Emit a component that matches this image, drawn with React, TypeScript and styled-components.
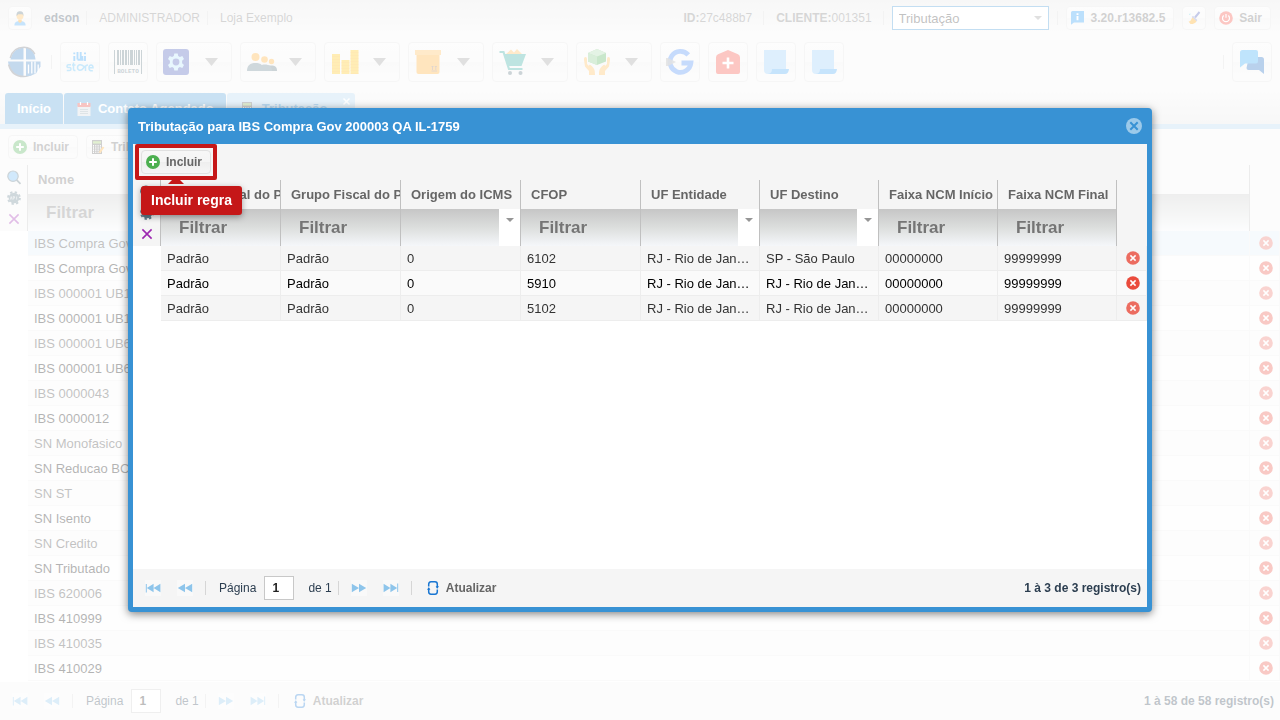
import React from "react";
import styled, { createGlobalStyle, css } from "styled-components";

const GlobalStyle = createGlobalStyle`
  * { box-sizing: border-box; }
  body {
    margin: 0;
    background: #fff;
    font-family: "Liberation Sans", Arial, sans-serif;
    font-size: 13px;
    color: #000;
  }
  button, input, select { font-family: inherit; }
  svg { display: block; flex: none; }
`;

/* ---------- icons ---------- */

const PlusIcon = () => (
  <svg width="14" height="14" viewBox="0 0 14 14">
    <circle cx="7" cy="7" r="7" fill="#4caf50" />
    <path d="M7 3.2v7.6M3.2 7h7.6" stroke="#fff" strokeWidth="2" />
  </svg>
);

const DeleteIcon = () => (
  <svg width="14" height="14" viewBox="0 0 14 14">
    <circle cx="7" cy="7" r="6.8" fill="#ea4b3c" />
    <path d="M4.4 4.4l5.200 5.200M9.600 4.400l-5.200 5.200" stroke="#fff" strokeWidth="1.5" />
  </svg>
);

const CloseIcon = () => (
  <svg width="16" height="16" viewBox="0 0 16 16">
    <circle cx="8" cy="8" r="8" fill="#9ccaea" />
    <path d="M4.3 4.3l7.4 7.4M11.7 4.3l-7.4 7.4" stroke="#3892d4" strokeWidth="2" />
  </svg>
);

const SearchIcon = () => (
  <svg width="16" height="16" viewBox="0 0 16 16">
    <path d="M10.300 10.600l4.200 4.200" stroke="#546e7a" strokeWidth="1.8" />
    <circle cx="7" cy="7.200" r="5.200" fill="#64b5f6" stroke="#546e7a" strokeWidth="1.200" />
  </svg>
);

const GearIcon = () => (
  <svg width="16" height="16" viewBox="0 0 16 16">
    <circle cx="8" cy="8" r="5.900" fill="none" stroke="#607d8b" strokeWidth="2" strokeDasharray="2.317 2.317" />
    <circle cx="8" cy="8" r="5.300" fill="#607d8b" />
    <path d="M4.300 9.600l.9-3 .9 3M7.200 9.600v-3h1.300v1.500H7.200M10.600 6.500v3.100" stroke="#cfd8dc" strokeWidth=".8" fill="none" />
  </svg>
);

const ClearIcon = () => (
  <svg width="16" height="16" viewBox="0 0 16 16">
    <path d="M3.4 3.4l9.2 9.2M12.6 3.4l-9.2 9.2" stroke="#9c27b0" strokeWidth="1.6" />
  </svg>
);

const UserIcon = () => (
  <svg width="16" height="16" viewBox="0 0 16 16">
    <path d="M2.4 15.5c0-3.4 2.4-4.4 5.6-4.4s5.6 1 5.6 4.4z" fill="#42a5f5" />
    <path d="M6.3 9.5h3.4v2.2L8 13l-1.7-1.3z" fill="#ff9800" />
    <circle cx="8" cy="6" r="3.5" fill="#ffb74d" />
    <path d="M4.6 6C4.300 2.500 5.600 1.300 8.200 1.300c2.500 0 3.600 1.700 3.200 4.700L10.400 4.300H6.200L5 5.800z" fill="#546e7a" />
  </svg>
);

const InfoIcon = () => (
  <svg width="14" height="14" viewBox="0 0 14 14">
    <path d="M1.5 0H13v11.5H3L0 13.8V1.5Q0 0 1.5 0z" fill="#2196f3" />
    <path d="M6.500 2.3v1.8M6.500 5v4.2" stroke="#fff" strokeWidth="1.9" />
  </svg>
);

const BroomIcon = () => (
  <svg width="14" height="14" viewBox="0 0 14 14">
    <path d="M12.500 1L8 6.5" stroke="#3f51b5" strokeWidth="2" />
    <path d="M6 4.800l4.300 4.300-1 1.400L4.600 6z" fill="#7986cb" />
    <path d="M5.200 6.200l4.300 4c-1 2-3.300 3-6 2.800L1.600 10.400c2 0 2.700-1.800 3.600-4.200z" fill="#ffa000" />
    <path d="M2 3.400l1.600-.4" stroke="#4dd0e1" strokeWidth="1" />
  </svg>
);

const PowerIcon = () => (
  <svg width="14" height="14" viewBox="0 0 14 14">
    <circle cx="7" cy="7" r="6.800" fill="#f44336" />
    <path d="M4.700 4.500a3.500 3.500 0 1 0 4.600 0M7 3v3.800" stroke="#fff" strokeWidth="1.200" fill="none" />
  </svg>
);

const BrandIcon = () => (
  <svg width="35" height="32" viewBox="0 0 35 32">
    <path d="M15.500 1.500v12H2.500C3.500 7 8 2 15.500 1.500z" fill="#2f7cc6" />
    <path d="M18 1.500v12h9.500C27 7 23 2 18 1.500z" fill="#2f7cc6" />
    <path d="M2.200 12C4 5 9 1.200 16 1.200c5 0 8.500 2.300 10.800 7" stroke="#6a6f78" strokeWidth="1.500" fill="none" />
    <path d="M0 15.500h15.500v14.800C7.500 30 .8 25 0 15.500z" fill="#3b7fc4" />
    <path d="M.6 18.500C2.500 26 8 30.400 15.500 30.600c4 0 7-1.300 9.500-3.600" stroke="#6a6f78" strokeWidth="1.500" fill="none" />
    <path d="M18 15.500h14.500v5L28 27.500l-6 2.500h-4z" fill="#3b7fc4" />
    <path d="M20.500 18.500v9M23.800 15.500v12M27 15.500v12M30.200 18.500v8" stroke="#fff" strokeWidth="1.300" />
  </svg>
);

const StoreIcon = () => (
  <svg width="28" height="24" viewBox="0 0 28 24">
    <g fill="none">
      <path d="M8.300 6v5M11.500 2v7.500M14.700 2v7.500M19 6v5M8.300 2.500v1.800M19 2.500v1.800M11.500 9.800h6M16.300 6v4" stroke="#2196f3" strokeWidth="1.900" />
      <path d="M5 14.800H2.500q-1.500 0-1.500 1.400t1.500 1.400h1q1.500 0 1.500 1.500t-1.500 1.500H.8M7.500 12.500v6.500q0 1.600 2 1.600M6 15h3.500M18 16.500c-3-3-6.500-2-6.500 1s3.500 4 6 .5l1.500-2M19.500 21v-4q0-2 2.500-2M23 17.700h4q0-2.800-2-2.800t-2 2.800q0 3 2 3h1.800" stroke="#4fb7f3" strokeWidth="1.500" />
    </g>
  </svg>
);

const BarcodeIcon = () => (
  <svg width="28" height="26" viewBox="0 0 28 26">
    <g fill="#546e7a">
      <path d="M0 1h1v24H0zM27 1h1v24h-1z" />
      <path d="M3 1h2v15H3zM6 1h1v15H6zM8 1h2v15H8zM11 1h2v15h-2zM14 1h1v15h-1zM16 1h3v15h-3zM20 1h1v15h-1zM22 1h1v15h-1zM24 1h2v15h-2z" />
      <text x="14" y="24" fontSize="6" fontWeight="700" fontFamily="Liberation Mono, monospace" textAnchor="middle">BOLETO</text>
    </g>
  </svg>
);

const SettingsIcon = () => (
  <svg width="26" height="26" viewBox="0 0 26 26">
    <rect width="26" height="26" rx="3" fill="#3f51b5" />
    <path
      d="M11.300 4.500h3.400l.5 2.500 1.700 1 2.400-.9 1.700 3-1.900 1.600v2.600l1.900 1.600-1.700 3-2.400-.9-1.700 1-.5 2.500h-3.400l-.5-2.500-1.700-1-2.400.9-1.700-3 1.900-1.600v-2.600l-1.900-1.600 1.700-3 2.400.9 1.700-1zM13 9.600a3.400 3.400 0 1 0 0 6.800 3.400 3.400 0 0 0 0-6.800z"
      fill="#b3e5fc"
      fillRule="evenodd"
    />
  </svg>
);

const PeopleIcon = () => (
  <svg width="30" height="26" viewBox="0 0 30 26">
    <path d="M16 22c0-4 2-5.500 7.500-5.500S30 18.500 30 22z" fill="#546e7a" />
    <path d="M12 22c0-5 2-6.500 6-6.500s7 2 7 6.500z" fill="#607d8b" />
    <path d="M0 22c0-5.500 3-8 8.500-8s8.500 2.500 8.500 8z" fill="#607d8b" />
    <circle cx="8.500" cy="8" r="4" fill="#ffa726" />
    <circle cx="17.500" cy="10.500" r="3.300" fill="#ffa726" />
    <circle cx="24.500" cy="12.500" r="2.700" fill="#ffa726" />
  </svg>
);

const CoinsIcon = () => (
  <svg width="28" height="26" viewBox="0 0 28 26">
    <g stroke="#ffc107" strokeWidth="8">
      <path d="M5 5v20M14.500 11v14M23.500 1v24" />
    </g>
    <g stroke="#ffa000" strokeWidth="8" strokeDasharray="1 2">
      <path d="M5 7v18M14.500 13v12M23.500 3v22" opacity=".35" />
    </g>
  </svg>
);

const BoxIcon = () => (
  <svg width="26" height="26" viewBox="0 0 26 26">
    <path d="M0 1h26v5H0z" fill="#ffb74d" />
    <path d="M1.500 6h23v17q0 2-2 2h-19q-2 0-2-2z" fill="#ffa726" />
    <path d="M17.500 21v-4M20.800 21v-4M16.500 22h5.500M16.500 18l1-1 1 1M19.800 18l1-1 1 1" stroke="#8d6e63" strokeWidth=".8" fill="none" />
  </svg>
);

const CartIcon = () => (
  <svg width="28" height="28" viewBox="0 0 28 28">
    <path d="M7 6l5-4.500 3 3 3-3.500 5 5z" fill="#ffb74d" />
    <path d="M5 6h22l-4.500 12H9.500z" fill="#26a69a" />
    <path d="M.5 4h4L10 21h13.500" stroke="#26a69a" strokeWidth="2.200" fill="none" />
    <circle cx="11" cy="25" r="2" fill="#546e7a" />
    <circle cx="21.500" cy="25" r="2" fill="#546e7a" />
  </svg>
);

const HandsIcon = () => (
  <svg width="28" height="28" viewBox="0 0 28 28">
    <path d="M14 1l9 4v8.500l-9 3.500-9-3.500V5z" fill="#4caf50" />
    <path d="M14 1l9 4-9 3.500L5 5z" fill="#a5d6a7" />
    <path d="M5 5l9 3.500V17l-9-3.500z" fill="#81c784" />
    <path d="M2.500 9Q.800 9 1 12l1 6.500L6 23v4h6c0-6-1-7-4.500-10Q6 16 6 18l-2-2v-5q0-2-1.500-2zM25.500 9q1.700 0 1.500 3l-1 6.500L22 23v4h-6c0-6 1-7 4.500-10Q22 16 22 18l2-2v-5q0-2 1.500-2z" fill="#ffb74d" />
  </svg>
);

const GoogleIcon = () => (
  <svg width="28" height="28" viewBox="0 0 28 28">
    <path d="M22.300 6.800A10.500 10.500 0 1 0 24.900 15H15.500" stroke="#4285f4" strokeWidth="4.800" fill="none" />
    <path d="M0 10h2l8 4-8 4H0z" fill="#9e9e9e" opacity=".85" />
  </svg>
);

const HealthIcon = () => (
  <svg width="24" height="24" viewBox="0 0 24 24">
    <path d="M12 0l10 4.200Q24 5 24 7.500V22q0 2-2 2H2q-2 0-2-2V7.500Q0 5 2 4.200z" fill="#f44336" />
    <path d="M12 7.500v11M6.500 13h11" stroke="#fff" strokeWidth="2.600" />
  </svg>
);

const ScrollIcon = () => (
  <svg width="26" height="26" viewBox="0 0 26 26">
    <path d="M1 1h22v19H9v5H5q-4 0-4-4z" fill="#90caf9" />
    <path d="M5 25q4-.5 4-5h17q-.5 5-4 5z" fill="#42a5f5" />
  </svg>
);

const ChatIcon = () => (
  <svg width="26" height="26" viewBox="0 0 26 26">
    <path d="M10 8h12.500Q25 8 25 10.500V25l-5-4H9.500Q7.500 21 7.500 19z" fill="#1565c0" />
    <path d="M3.500 1H17q2 0 2 2v9.500q0 2-2 2H6L1 18.500V3.500Q1 1 3.500 1z" fill="#29a3f3" />
  </svg>
);

const CalendarIcon = () => (
  <svg width="14" height="14" viewBox="0 0 14 14">
    <path d="M.5 4h13v10H.5z" fill="#cfd8dc" />
    <path d="M.5 1h13v4H.5z" fill="#e53935" />
    <path d="M3.500 0v3M10.500 0v3" stroke="#fff" strokeWidth="1.200" />
    <path d="M3 7.500h8M3 9.500h8M3 11.500h8" stroke="#90a4ae" />
  </svg>
);

const CalculatorIcon = () => (
  <svg width="14" height="14" viewBox="0 0 14 14">
    <path d="M1 0h10v14H1z" fill="#616161" />
    <path d="M2 1.200h8v2.400H2z" fill="#9ccc65" />
    <path d="M2.500 5v8M4.800 5v8M7.100 5v8M9.400 5v8" stroke="#fff" strokeDasharray="1.600 .6" />
    <path d="M12.500 7L8.500 12.800" stroke="#ffa726" strokeWidth="2" />
  </svg>
);

const ArrowDown = ({ size = 10 }: { size?: number }) => (
  <svg width={size} height={size / 2} viewBox="0 0 10 5">
    <path d="M0 0h10L5 5z" fill="#969696" />
  </svg>
);

const MenuArrow = () => (
  <svg width="13" height="8" viewBox="0 0 13 8">
    <path d="M0 0h13L6.500 8z" fill="#969696" />
  </svg>
);

type PageKind = "first" | "prev" | "next" | "last";

const PageArrow = ({ kind }: { kind: PageKind }) => (
  <svg width="16" height="16" viewBox="0 0 16 16">
    <path d="M0 0h16v16H0z" fill="#f9f9f9" />
    <g fill="#8ec5eb" transform={kind === "next" || kind === "last" ? "rotate(180 8 8)" : undefined}>
      {(kind === "first" || kind === "last") && <path d="M.8 4h1v8.500h-1z" />}
      {kind === "first" || kind === "last" ? (
        <path d="M8.600 3.700v8.600L1.800 8zM15.400 3.700v8.600L8.600 8z" />
      ) : (
        <path d="M8 3.700v8.600L.8 8zM15.200 3.700v8.600L8 8z" />
      )}
    </g>
  </svg>
);

const RefreshIcon = () => (
  <svg width="12" height="16" viewBox="0 0 12 16">
    <path d="M1.700 6.500V4.500Q1.700 1.800 4 1.800h4q2.300 0 2.300 2.400v4M10.300 9.500v2Q10.300 14.200 8 14.200H4q-2.300 0-2.300-2.400v-4" stroke="#1976d2" strokeWidth="1.500" fill="none" />
    <path d="M8.600 6.300h3.400L10.300 8.600zM0 9.700h3.400L1.700 7.400z" fill="#1976d2" />
  </svg>
);

/* ---------- shared controls ---------- */

const raised = css`
  border: 1px solid #e1e1e1;
  border-radius: 4px;
  background: linear-gradient(#f7f7f7, #f5f5f5 50%, #eeeeee 50%, #f6f6f6);
`;

const Button = styled.button`
  ${raised}
  display: flex;
  align-items: center;
  gap: 6px;
  height: 24px;
  padding: 0 8px 0 4px;
  color: #666;
  font-size: 12px;
  font-weight: 700;
  white-space: nowrap;
`;

const SquareButton = styled(Button)`
  justify-content: center;
  width: 24px;
  padding: 0;
`;

const PlainButton = styled.button`
  display: flex;
  align-items: center;
  justify-content: center;
  gap: 7px;
  padding: 0;
  border: 0;
  background: none;
  color: #666;
  font-size: 12px;
  font-weight: 700;
`;

const Divider = styled.span`
  flex: none;
  width: 1px;
  height: 14px;
  background: #d6d6d6;
`;

/* ---------- header ---------- */

const Page = styled.div`
  display: flex;
  flex-direction: column;
  min-height: 100vh;
  background: #fff;
`;

const TopBar = styled.header`
  display: flex;
  align-items: center;
  justify-content: space-between;
  height: 36px;
  padding: 0 9px 0 8px;
  background: linear-gradient(#e4e4e4, #f5f5f5);
  color: #777;
  font-size: 12px;
  white-space: nowrap;
`;

const UserInfo = styled.div`
  display: flex;
  align-items: center;
  gap: 12px;
`;

const UserText = styled.span<{ $strong?: boolean }>`
  display: flex;
  align-items: center;
  gap: 7px;
  color: ${(p) => (p.$strong ? "#334455" : "#777")};
  font-weight: ${(p) => (p.$strong ? 700 : 400)};
`;

const Session = styled.div`
  display: flex;
  align-items: center;
  gap: 8px;
`;

const SessionText = styled.span`
  padding: 0 3px 0 4px;
  color: #777;
`;

const ModuleBox = styled.div`
  position: relative;
  width: 157px;

  svg {
    position: absolute;
    right: 7px;
    top: 10px;
    pointer-events: none;
  }
`;

const ModuleSelect = styled.select`
  appearance: none;
  display: block;
  width: 100%;
  height: 24px;
  padding: 0 6px;
  border: 1px solid #3892d4;
  border-radius: 0;
  background: #fff;
  color: #333;
  font-size: 13px;
`;

const MainBar = styled.nav`
  display: flex;
  align-items: center;
  gap: 8px;
  height: 52px;
  padding: 0 8px;
  background: #f5f5f5;
`;

const MainButton = styled.button<{ $menu?: boolean }>`
  ${raised}
  display: flex;
  align-items: center;
  justify-content: ${(p) => (p.$menu ? "space-between" : "center")};
  width: ${(p) => (p.$menu ? 76 : 40)}px;
  height: 40px;
  padding: ${(p) => (p.$menu ? "0 13px 0 6px" : 0)};
`;

const Spacer = styled.div`
  flex: 1;
`;

const TabBar = styled.div`
  display: flex;
  align-items: flex-end;
  gap: 1px;
  height: 41px;
  padding: 0 5px;
  border-bottom: 5px solid #add2ed;
  background: linear-gradient(#f5f5f5, #e4e4e4);
`;

const Tab = styled.button<{ $active?: boolean }>`
  position: relative;
  display: flex;
  align-items: center;
  gap: 7px;
  height: 31px;
  padding: ${(p) => (p.$active ? "0 28px 0 13px" : "0 12px")};
  border: 0;
  border-radius: 3px 3px 0 0;
  background: ${(p) => (p.$active ? "#add2ed" : "#4b9cd7")};
  color: ${(p) => (p.$active ? "#157fcc" : "#fff")};
  font-size: 13px;
  font-weight: 700;

  > svg {
    margin-left: 1px;
  }
`;

const TabClose = styled.span`
  position: absolute;
  top: 4px;
  right: 4px;
`;

const ActionBar = styled.div`
  display: flex;
  align-items: center;
  gap: 8px;
  height: 36px;
  padding: 0 8px;
  background: #f5f5f5;
`;

/* ---------- grid ---------- */

const GridArea = styled.div`
  display: flex;
  flex: 1;
  align-items: flex-start;
`;

const GridTools = styled.div`
  display: flex;
  flex: none;
  flex-direction: column;
  width: 28px;
  height: 66px;
  padding-top: 1px;
  border-right: 1px solid #c0c0c0;
  background: #f5f5f5;

  button {
    height: 21px;
  }
`;

const Table = styled.table`
  flex: 1;
  width: 0;
  table-layout: fixed;
  border-collapse: separate;
  border-spacing: 0;
`;

const DataCol = styled.col<{ $width?: string }>`
  width: ${(p) => p.$width ?? "auto"};
`;

const HeadCell = styled.th`
  height: 29px;
  padding: 0 0 0 10px;
  overflow: hidden;
  border-right: 1px solid #c0c0c0;
  background: #f5f5f5;
  color: #666;
  font-size: 13px;
  text-align: left;
  white-space: nowrap;
`;

const HeadEnd = styled.td`
  background: #f5f5f5;
`;

const FilterCell = styled.td`
  height: 37px;
  padding: 0;
  border-right: 1px solid #c0c0c0;
  background: linear-gradient(#c6c6c6, #dcdedd 50%, #f5f7fa);
`;

const FilterInput = styled.input`
  display: block;
  width: 100%;
  height: 37px;
  padding: 1px 0 0 18px;
  border: 0;
  background: none;
  font-size: 17px;
  font-weight: 700;

  &::placeholder {
    color: #757575;
    opacity: 1;
  }
`;

const FilterSelectBox = styled.div`
  position: relative;
  height: 37px;
`;

const FilterSelect = styled.select`
  appearance: none;
  width: 100%;
  height: 37px;
  border: 0;
  background: none;
`;

const FilterTrigger = styled.span`
  position: absolute;
  top: 0;
  right: 0;
  display: flex;
  justify-content: center;
  width: 21px;
  height: 37px;
  padding-top: 9px;
  background: #fff;
  pointer-events: none;
`;

const Cell = styled.td`
  height: 25px;
  padding: 0 6px;
  overflow: hidden;
  border-right: 1px solid #ededed;
  border-bottom: 1px solid #ededed;
  text-overflow: ellipsis;
  white-space: nowrap;
`;

const RowAction = styled(PlainButton)`
  width: 100%;
`;

const ActionCell = styled(Cell)`
  padding: 0 0 0 2px;
`;

const Row = styled.tr<{ $selected?: boolean; $page?: boolean }>`
  background: ${(p) => (p.$page ? "#fcfcfc" : "#fafafa")};

  &:nth-child(odd) {
    background: ${(p) => (p.$selected ? "#e2eff8" : p.$page ? "#f8f8f8" : "#f5f5f5")};
    color: #333;
  }
  &:nth-child(odd) svg {
    opacity: 0.8;
  }
`;

const Footer = styled.footer`
  display: flex;
  flex: none;
  align-items: center;
  height: 38px;
  padding: 0 6px 0 12px;
  background: #f5f5f5;
  color: #2c3e50;
  font-size: 12px;
`;

const PageButtons = styled.div`
  display: flex;
  align-items: center;
  gap: 12px;

  button + button {
    margin-left: 4px;
  }
`;

const PageField = styled.div`
  display: flex;
  align-items: center;
  gap: 8px;
  padding: 0 6px 0 13px;

  span {
    padding-left: 6px;
  }
`;

const PageInput = styled.input`
  width: 30px;
  height: 24px;
  padding: 0 7px;
  border: 1px solid #c8c8c8;
  background: #fff;
  color: #222;
  font-size: 12px;
  font-weight: 700;
`;

const NextButtons = styled(PageButtons)`
  padding: 0 15px 0 12px;
`;

const Total = styled.strong`
  margin-left: auto;
`;

/* ---------- modal ---------- */

const Overlay = styled.div`
  position: fixed;
  inset: 0;
  display: flex;
  align-items: center;
  justify-content: center;
  background: rgba(255, 255, 255, 0.7);
`;

const Modal = styled.section`
  display: flex;
  flex-direction: column;
  width: 80%;
  height: 70%;
  padding: 0 5px 5px;
  border-radius: 4px;
  background: #3892d4;
  box-shadow: 0 2px 8px rgba(0, 0, 0, 0.5);
`;

const ModalTitle = styled.div`
  display: flex;
  flex: none;
  align-items: center;
  justify-content: space-between;
  height: 36px;
  padding: 0 5px;
  color: #fff;

  h2 {
    margin: 0;
    font-size: 13px;
  }
`;

const ModalBody = styled.div`
  display: flex;
  flex: 1;
  flex-direction: column;
  min-height: 0;
  background: #fff;
`;

const Highlight = styled.div`
  position: relative;

  &::after {
    content: "";
    position: absolute;
    inset: -6px;
    border: 4px solid #c51718;
    border-radius: 2px;
    pointer-events: none;
  }
`;

const Hint = styled.div`
  position: absolute;
  z-index: 2;
  top: 36px;
  left: 0;
  padding: 0 10px;
  border-radius: 3px;
  background: #c51718;
  box-shadow: 0 2px 6px rgba(0, 0, 0, 0.35);
  color: #fff;
  font-size: 14px;
  font-weight: 700;
  line-height: 29px;
  white-space: nowrap;

  &::before {
    content: "";
    position: absolute;
    top: -10px;
    left: 27px;
    border: 8px solid transparent;
    border-top: 0;
    border-bottom-color: #c51718;
  }
`;

const Tools = () => (
  <GridTools>
    <PlainButton aria-label="Pesquisar"><SearchIcon /></PlainButton>
    <PlainButton aria-label="Configurar"><GearIcon /></PlainButton>
    <PlainButton aria-label="Limpar filtros"><ClearIcon /></PlainButton>
  </GridTools>
);

const Paging = ({ id, total }: { id: string; total: string }) => (
  <Footer>
    <PageButtons>
      <PlainButton aria-label="Primeira página"><PageArrow kind="first" /></PlainButton>
      <PlainButton aria-label="Página anterior"><PageArrow kind="prev" /></PlainButton>
      <Divider />
    </PageButtons>
    <PageField>
      <label htmlFor={id}>Página</label>
      <PageInput id={id} defaultValue="1" />
      <span>de 1</span>
    </PageField>
    <Divider />
    <NextButtons>
      <PlainButton aria-label="Próxima página"><PageArrow kind="next" /></PlainButton>
      <PlainButton aria-label="Última página"><PageArrow kind="last" /></PlainButton>
      <Divider />
    </NextButtons>
    <PlainButton><RefreshIcon />Atualizar</PlainButton>
    <Total>{total}</Total>
  </Footer>
);

const menus = [
  { name: "Configurações", icon: <SettingsIcon /> },
  { name: "Pessoas", icon: <PeopleIcon /> },
  { name: "Financeiro", icon: <CoinsIcon /> },
  { name: "Estoque", icon: <BoxIcon /> },
  { name: "Vendas", icon: <CartIcon /> },
  { name: "Produtos", icon: <HandsIcon /> },
];

const shortcuts = [
  { name: "Google", icon: <GoogleIcon /> },
  { name: "Farmácia", icon: <HealthIcon /> },
  { name: "Relatório fiscal", icon: <ScrollIcon /> },
  { name: "Relatório geral", icon: <ScrollIcon /> },
];

const taxes = [
  "IBS Compra Gov 200003 QA IL-1759",
  "IBS Compra Gov",
  "IBS 000001 UB1",
  "IBS 000001 UB1",
  "IBS 000001 UB6",
  "IBS 000001 UB6",
  "IBS 0000043",
  "IBS 0000012",
  "SN Monofasico",
  "SN Reducao BC",
  "SN ST",
  "SN Isento",
  "SN Credito",
  "SN Tributado",
  "IBS 620006",
  "IBS 410999",
  "IBS 410035",
  "IBS 410029",
];

const columns = [
  { title: "Grupo Fiscal do Produto", width: "120px" },
  { title: "Grupo Fiscal do Parceiro", width: "120px" },
  { title: "Origem do ICMS", width: "120px", list: true },
  { title: "CFOP", width: "120px" },
  { title: "UF Entidade", list: true },
  { title: "UF Destino", list: true },
  { title: "Faixa NCM Início" },
  { title: "Faixa NCM Final" },
];

const rules = [
  ["Padrão", "Padrão", "0", "6102", "RJ - Rio de Janeiro", "SP - São Paulo", "00000000", "99999999"],
  ["Padrão", "Padrão", "0", "5910", "RJ - Rio de Janeiro", "RJ - Rio de Janeiro", "00000000", "99999999"],
  ["Padrão", "Padrão", "0", "5102", "RJ - Rio de Janeiro", "RJ - Rio de Janeiro", "00000000", "99999999"],
];

export default function App() {
  return (
    <>
      <GlobalStyle />
      <Page>
        <TopBar>
          <UserInfo>
            <SquareButton aria-label="Usuário"><UserIcon /></SquareButton>
            <UserText $strong>edson<Divider /></UserText>
            <UserText>ADMINISTRADOR<Divider /></UserText>
            <UserText>Loja Exemplo</UserText>
          </UserInfo>
          <Session>
            <SessionText><b>ID:</b>27c488b7</SessionText>
            <Divider />
            <SessionText><b>CLIENTE:</b>001351</SessionText>
            <Divider />
            <ModuleBox>
              <ModuleSelect aria-label="Módulo" defaultValue="Tributação">
                <option>Tributação</option>
              </ModuleSelect>
              <ArrowDown size={8} />
            </ModuleBox>
            <Divider />
            <Button><InfoIcon />3.20.r13682.5</Button>
            <SquareButton aria-label="Limpar"><BroomIcon /></SquareButton>
            <Button><PowerIcon />Sair</Button>
          </Session>
        </TopBar>
        <MainBar>
          <BrandIcon />
          <Divider />
          <MainButton aria-label="illi store"><StoreIcon /></MainButton>
          <MainButton aria-label="Boleto"><BarcodeIcon /></MainButton>
          {menus.map((m) => (
            <MainButton key={m.name} aria-label={m.name} $menu>
              {m.icon}
              <MenuArrow />
            </MainButton>
          ))}
          {shortcuts.map((s) => (
            <MainButton key={s.name} aria-label={s.name}>{s.icon}</MainButton>
          ))}
          <Spacer />
          <Divider />
          <MainButton aria-label="Mensagens"><ChatIcon /></MainButton>
        </MainBar>
        <TabBar>
          <Tab>Início</Tab>
          <Tab><CalendarIcon />Contato Agendado</Tab>
          <Tab $active>
            <CalculatorIcon />Tributação
            <TabClose>
              <svg width="9" height="9" viewBox="0 0 9 9">
                <path d="M1.500 1.500l6 6M7.500 1.500l-6 6" stroke="#fff" strokeWidth="1.500" />
              </svg>
            </TabClose>
          </Tab>
        </TabBar>
        <ActionBar>
          <Button><PlusIcon />Incluir</Button>
          <Button><CalculatorIcon />Tributação</Button>
        </ActionBar>
        <GridArea>
          <Tools />
          <Table>
            <colgroup><DataCol /><DataCol $width="30px" /></colgroup>
            <thead>
              <tr><HeadCell scope="col">Nome</HeadCell><HeadEnd /></tr>
              <tr>
                <FilterCell><FilterInput aria-label="Filtrar Nome" placeholder="Filtrar" /></FilterCell>
                <HeadEnd />
              </tr>
            </thead>
            <tbody>
              {taxes.map((name, i) => (
                <Row key={i} $page $selected={i === 0}>
                  <Cell>{name}</Cell>
                  <ActionCell><RowAction aria-label="Excluir"><DeleteIcon /></RowAction></ActionCell>
                </Row>
              ))}
            </tbody>
          </Table>
        </GridArea>
        <Paging id="page-main" total="1 à 58 de 58 registro(s)" />
      </Page>

      <Overlay>
        <Modal role="dialog" aria-labelledby="modal-title">
          <ModalTitle>
            <h2 id="modal-title">Tributação para IBS Compra Gov 200003 QA IL-1759</h2>
            <PlainButton aria-label="Fechar"><CloseIcon /></PlainButton>
          </ModalTitle>
          <ModalBody>
            <ActionBar>
              <Highlight>
                <Button><PlusIcon />Incluir</Button>
                <Hint role="tooltip">Incluir regra</Hint>
              </Highlight>
            </ActionBar>
            <GridArea>
              <Tools />
              <Table>
                <colgroup>
                  {columns.map((c) => <DataCol key={c.title} $width={c.width} />)}
                  <DataCol $width="30px" />
                </colgroup>
                <thead>
                  <tr>
                    {columns.map((c) => <HeadCell key={c.title} scope="col">{c.title}</HeadCell>)}
                    <HeadEnd />
                  </tr>
                  <tr>
                    {columns.map((c) => (
                      <FilterCell key={c.title}>
                        {c.list ? (
                          <FilterSelectBox>
                            <FilterSelect aria-label={"Filtrar " + c.title}><option /></FilterSelect>
                            <FilterTrigger><ArrowDown size={8} /></FilterTrigger>
                          </FilterSelectBox>
                        ) : (
                          <FilterInput aria-label={"Filtrar " + c.title} placeholder="Filtrar" />
                        )}
                      </FilterCell>
                    ))}
                    <HeadEnd />
                  </tr>
                </thead>
                <tbody>
                  {rules.map((rule, i) => (
                    <Row key={i}>
                      {rule.map((value, j) => <Cell key={j}>{value}</Cell>)}
                      <ActionCell><RowAction aria-label="Excluir"><DeleteIcon /></RowAction></ActionCell>
                    </Row>
                  ))}
                </tbody>
              </Table>
            </GridArea>
            <Paging id="page-rules" total="1 à 3 de 3 registro(s)" />
          </ModalBody>
        </Modal>
      </Overlay>
    </>
  );
}
